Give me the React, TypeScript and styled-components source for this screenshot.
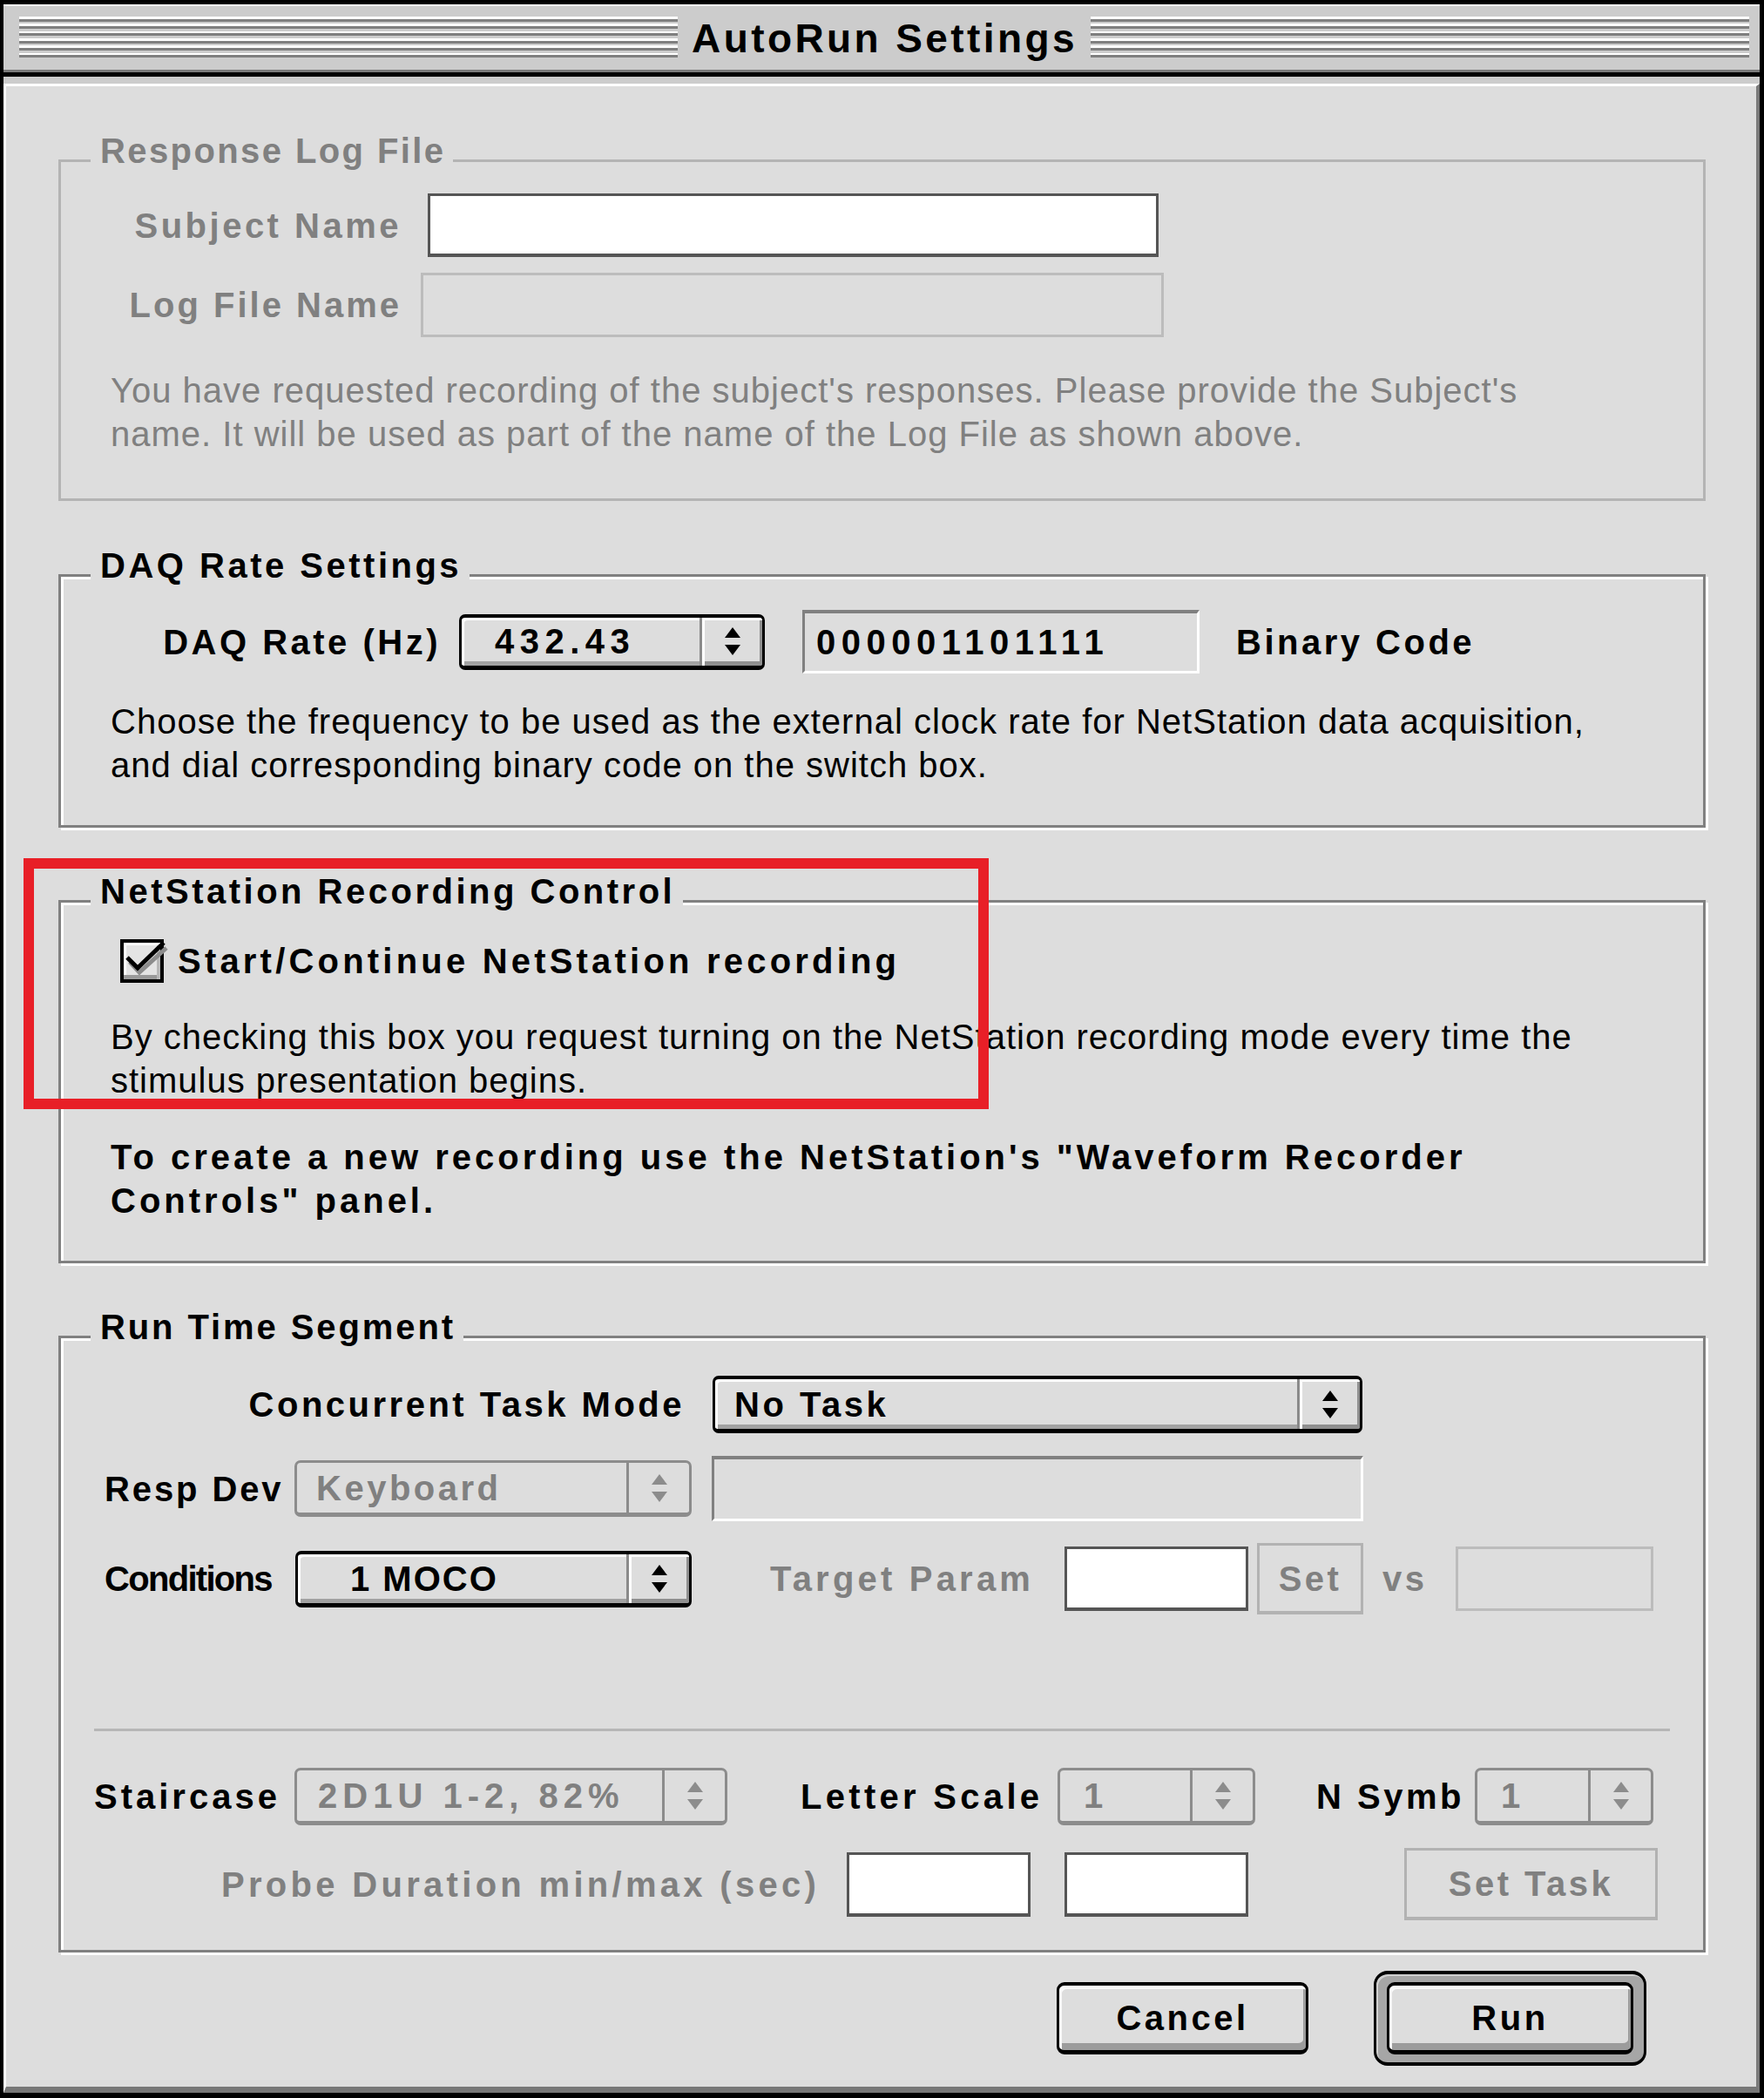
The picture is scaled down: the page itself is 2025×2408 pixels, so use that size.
import React from 'react';
import styled, { createGlobalStyle } from 'styled-components';

const FONT = `"Liberation Sans", Arial, Helvetica, sans-serif`;

const GlobalStyle = createGlobalStyle`
  html, body { margin: 0; padding: 0; background: #000; }
  body { font-family: ${FONT}; }
  #root { width: 2025px; height: 2408px; }
`;

const Window = styled.div`
  position: relative;
  width: 2025px;
  height: 2408px;
  box-sizing: border-box;
  border-style: solid;
  border-color: #000;
  border-width: 5px 5px 6px 4px;
  display: flex;
  flex-direction: column;
  background: #cccccc;
  font-family: ${FONT};
`;

const TitleBar = styled.div`
  flex: none;
  height: 83px;
  box-sizing: border-box;
  display: flex;
  align-items: center;
  padding: 2px 12px 3px 18px;
  background: #cccccc;
  border-bottom: 5px solid #000;
  box-shadow: inset 0 2px 0 #fff, inset 0 -3px 0 #7a7a7a;
`;

const Stripes = styled.div`
  flex: 1;
  height: 50px;
  background: repeating-linear-gradient(
    to bottom,
    #ffffff 0px,
    #ffffff 2.6px,
    #7f7f7f 2.6px,
    #7f7f7f 5.6px,
    transparent 5.6px,
    transparent 8.35px
  );
`;

const TitleText = styled.div`
  flex: none;
  margin: 0 15px 0 16px;
  font-weight: 700;
  font-size: 46px;
  line-height: 50px;
  letter-spacing: 3.4px;
  color: #000;
  white-space: nowrap;
`;

const Body = styled.div`
  flex: 1;
  display: flex;
  flex-direction: column;
  padding-top: 8px;
  background: #cccccc;
`;

const Panel = styled.div`
  flex: 1;
  display: flex;
  flex-direction: column;
  box-sizing: border-box;
  background: #dddddd;
  border-top: 3px solid #fff;
  border-left: 3px solid #fff;
  border-right: 4px solid #7a7a7a;
  border-bottom: 7px solid #777;
  padding: 84px 58px 0 60px;
`;

const Group = styled.section<{ $disabled?: boolean; $mt: number; $pb: number }>`
  margin-top: ${p => p.$mt}px;
  border: 3px solid ${p => (p.$disabled ? '#b4b4b4' : '#808080')};
  box-shadow: ${p => (p.$disabled ? 'none' : 'inset 3px 3px 0 #fff, 3px 3px 0 #fff')};
  padding-bottom: ${p => p.$pb}px;
  display: flex;
  flex-direction: column;
`;

const Legend = styled.div<{ $dim?: boolean; $ls?: number }>`
  align-self: flex-start;
  margin: -38px 0 0 34px;
  padding: 0 9px 0 11px;
  background: #dddddd;
  font-weight: 700;
  font-size: 40px;
  line-height: 50px;
  letter-spacing: ${p => p.$ls ?? 3.5}px;
  color: ${p => (p.$dim ? '#808080' : '#000')};
  white-space: nowrap;
`;

const Row = styled.div<{ $mt: number; $h: number }>`
  display: flex;
  align-items: center;
  margin-top: ${p => p.$mt}px;
  height: ${p => p.$h}px;
`;

const Label = styled.div<{ $w?: number; $ml?: number; $right?: boolean; $dim?: boolean; $ls?: number }>`
  flex: none;
  width: ${p => (p.$w ? `${p.$w}px` : 'auto')};
  margin-left: ${p => p.$ml ?? 0}px;
  text-align: ${p => (p.$right ? 'right' : 'left')};
  font-weight: 700;
  font-size: 40px;
  line-height: 50px;
  letter-spacing: ${p => p.$ls ?? 3.5}px;
  color: ${p => (p.$dim ? '#808080' : '#000')};
  white-space: nowrap;
`;

const Para = styled.p<{ $mt: number; $bold?: boolean; $dim?: boolean }>`
  margin: ${p => p.$mt}px 0 0 57px;
  font-size: 40px;
  line-height: 50px;
  font-weight: ${p => (p.$bold ? 700 : 400)};
  letter-spacing: ${p => (p.$bold ? 4 : 1)}px;
  color: ${p => (p.$dim ? '#808080' : '#000')};
  white-space: nowrap;
`;

const PopupFrame = styled.div<{ $w: number; $h: number; $ml?: number; $disabled?: boolean }>`
  flex: none;
  display: flex;
  width: ${p => p.$w}px;
  height: ${p => p.$h}px;
  margin-left: ${p => p.$ml ?? 0}px;
  box-sizing: border-box;
  border: 3px solid ${p => (p.$disabled ? '#8c8c8c' : '#000')};
  border-top-width: ${p => (p.$disabled ? 3 : 4)}px;
  border-bottom-width: 5px;
  border-radius: 7px;
  background: #dddddd;
  box-shadow: ${p => (p.$disabled ? 'none' : 'inset 3px 3px 0 #fff, inset 0 -5px 0 #a2a2a2')};
  overflow: hidden;
`;

const PopupValue = styled.div<{ $pad: number; $disabled?: boolean; $ls?: number }>`
  flex: 1;
  display: flex;
  align-items: center;
  padding-left: ${p => p.$pad}px;
  font-weight: 700;
  font-size: 40px;
  line-height: 50px;
  letter-spacing: ${p => p.$ls ?? 3.5}px;
  color: ${p => (p.$disabled ? '#808080' : '#000')};
  white-space: nowrap;
`;

const PopupArrows = styled.div<{ $disabled?: boolean }>`
  flex: none;
  width: 69px;
  display: flex;
  align-items: center;
  justify-content: center;
  border-left: 3px solid ${p => (p.$disabled ? '#8c8c8c' : '#8a8a8a')};
  box-shadow: ${p => (p.$disabled ? 'none' : 'inset 3px 3px 0 #fff, inset -3px -5px 0 #8f8f8f')};
`;

const TextBox = styled.div<{ $w: number; $h: number; $ml?: number }>`
  flex: none;
  width: ${p => p.$w}px;
  height: ${p => p.$h}px;
  margin-left: ${p => p.$ml ?? 0}px;
  box-sizing: border-box;
  background: #fff;
  border: 3px solid #555;
  border-bottom-width: 4px;
`;

const InsetField = styled.div<{ $w: number; $h: number; $ml?: number }>`
  flex: none;
  display: flex;
  align-items: center;
  width: ${p => p.$w}px;
  height: ${p => p.$h}px;
  margin-left: ${p => p.$ml ?? 0}px;
  box-sizing: border-box;
  background: #dddddd;
  border-style: solid;
  border-width: 4px 3px 3px 3px;
  border-color: #808080 #fff #fff #808080;
  padding-left: 13px;
`;

const FieldText = styled.span`
  font-weight: 700;
  font-size: 40px;
  line-height: 50px;
  letter-spacing: 6.5px;
  color: #000;
`;

const DimField = styled.div<{ $w: number; $h: number; $ml?: number }>`
  flex: none;
  width: ${p => p.$w}px;
  height: ${p => p.$h}px;
  margin-left: ${p => p.$ml ?? 0}px;
  box-sizing: border-box;
  background: #dddddd;
  border: 3px solid #bcbcbc;
`;

const DimButton = styled.div<{ $w: number; $h: number; $ml?: number }>`
  flex: none;
  display: flex;
  align-items: center;
  justify-content: center;
  width: ${p => p.$w}px;
  height: ${p => p.$h}px;
  margin-left: ${p => p.$ml ?? 0}px;
  box-sizing: border-box;
  background: #dddddd;
  border: 3px solid #b2b2b2;
  border-bottom-width: 4px;
  font-weight: 700;
  font-size: 40px;
  line-height: 50px;
  letter-spacing: 3.5px;
  color: #808080;
  white-space: nowrap;
`;

const Separator = styled.div`
  margin: 131px 0 0 38px;
  width: 1809px;
  height: 3px;
  background: #b6b6b6;
`;

const CheckWrap = styled.div`
  flex: none;
  width: 50px;
  height: 50px;
  margin-left: 68px;
  svg { display: block; overflow: visible; }
`;

const ButtonRow = styled.div`
  display: flex;
  justify-content: flex-end;
  align-items: center;
  margin-top: 21px;
  height: 109px;
  padding-right: 68px;
`;

const PushButton = styled.div<{ $w?: number }>`
  flex: none;
  display: flex;
  align-items: center;
  justify-content: center;
  width: ${p => (p.$w ? `${p.$w}px` : '100%')};
  height: 83px;
  box-sizing: border-box;
  background: #dddddd;
  border: 3px solid #000;
  border-top-width: 4px;
  border-bottom-width: 5px;
  border-radius: 9px;
  box-shadow: inset 3px 4px 0 #fafafa, inset -3px -8px 0 #9c9c9c;
  font-weight: 700;
  font-size: 40px;
  line-height: 50px;
  letter-spacing: 3.5px;
  color: #000;
  white-space: nowrap;
`;

const DefaultRing = styled.div`
  flex: none;
  display: flex;
  width: 313px;
  height: 109px;
  margin-left: 75px;
  box-sizing: border-box;
  border: 3px solid #000;
  border-top-width: 4px;
  border-bottom-width: 4px;
  border-radius: 16px;
  background: #a6a6a6;
  box-shadow: inset 2px 2px 0 #d0d0d0;
  padding: 9px 12px;
`;

const Highlight = styled.div`
  position: absolute;
  left: 23px;
  top: 980px;
  width: 1108px;
  height: 288px;
  box-sizing: border-box;
  border: 12px solid #e81f27;
  pointer-events: none;
`;

const Arrows: React.FC<{ color: string }> = ({ color }) => (
  <svg width="18" height="32" viewBox="0 0 18 32">
    <polygon points="9,0 18,12 0,12" fill={color} />
    <polygon points="0,20 18,20 9,32" fill={color} />
  </svg>
);

const Popup: React.FC<{
  w: number;
  h?: number;
  ml?: number;
  pad: number;
  value: string;
  disabled?: boolean;
  ls?: number;
}> = ({ w, h = 65, ml, pad, value, disabled, ls }) => (
  <PopupFrame $w={w} $h={h} $ml={ml} $disabled={disabled}>
    <PopupValue $pad={pad} $disabled={disabled} $ls={ls}>
      {value}
    </PopupValue>
    <PopupArrows $disabled={disabled}>
      <Arrows color={disabled ? '#8c8c8c' : '#000'} />
    </PopupArrows>
  </PopupFrame>
);

const CheckBox: React.FC = () => (
  <CheckWrap>
    <svg width="50" height="50" viewBox="0 0 50 50">
      <rect x="0" y="0" width="50" height="50" fill="#000" />
      <rect x="4" y="4" width="42" height="42" fill="#e4e4e4" />
      <rect x="4" y="4" width="42" height="3" fill="#fff" />
      <rect x="4" y="4" width="3" height="42" fill="#fff" />
      <rect x="4" y="41" width="42" height="5" fill="#9a9a9a" />
      <rect x="42" y="7" width="4" height="39" fill="#b8b8b8" />
      <polyline points="11,26 22,38 53,10" fill="none" stroke="#8c8c8c" strokeWidth="5" />
      <polyline points="8,21 20,33 50,4" fill="none" stroke="#000" strokeWidth="5" />
    </svg>
  </CheckWrap>
);

export default function App() {
  return (
    <>
      <GlobalStyle />
      <Window>
        <TitleBar>
          <Stripes />
          <TitleText>AutoRun Settings</TitleText>
          <Stripes />
        </TitleBar>
        <Body>
          <Panel>
            <Group $disabled $mt={0} $pb={49}>
              <Legend $dim $ls={2.4}>Response Log File</Legend>
              <Row $mt={24} $h={73}>
                <Label $w={391} $right $dim>Subject Name</Label>
                <TextBox $w={839} $h={73} $ml={30} />
              </Row>
              <Row $mt={18} $h={74}>
                <Label $w={391} $right $dim $ls={3}>Log File Name</Label>
                <DimField $w={853} $h={74} $ml={22} />
              </Row>
              <Para $mt={36} $dim>
                You have requested recording of the subject's responses. Please provide the Subject's
                <br />
                name. It will be used as part of the name of the Log File as shown above.
              </Para>
            </Group>

            <Group $mt={84} $pb={44}>
              <Legend>DAQ Rate Settings</Legend>
              <Row $mt={26} $h={73}>
                <Label $w={436} $right>DAQ Rate (Hz)</Label>
                <Popup w={351} h={64} ml={21} pad={38} value="432.43" ls={6.5} />
                <InsetField $w={456} $h={73} $ml={43}>
                  <FieldText>000001101111</FieldText>
                </InsetField>
                <Label $ml={42}>Binary Code</Label>
              </Row>
              <Para $mt={30}>
                Choose the frequency to be used as the external clock rate for NetStation data acquisition,
                <br />
                and dial corresponding binary code on the switch box.
              </Para>
            </Group>

            <Group $mt={83} $pb={44}>
              <Legend>NetStation Recording Control</Legend>
              <Row $mt={30} $h={50}>
                <CheckBox />
                <Label $ml={16} $ls={4.2}>Start/Continue NetStation recording</Label>
              </Row>
              <Para $mt={37}>
                By checking this box you request turning on the NetStation recording mode every time the
                <br />
                stimulus presentation begins.
              </Para>
              <Para $mt={38} $bold>
                To create a new recording use the NetStation's "Waveform Recorder
                <br />
                Controls" panel.
              </Para>
            </Group>

            <Group $mt={83} $pb={34}>
              <Legend $ls={2.9}>Run Time Segment</Legend>
              <Row $mt={31} $h={66}>
                <Label $w={716} $right>Concurrent Task Mode</Label>
                <Popup w={746} h={66} ml={32} pad={22} value="No Task" />
              </Row>
              <Row $mt={26} $h={75}>
                <Label $ml={50} $w={218} $ls={2.9}>Resp Dev</Label>
                <Popup w={456} pad={22} value="Keyboard" disabled />
                <InsetField $w={748} $h={75} $ml={23} />
              </Row>
              <Row $mt={25} $h={82}>
                <Label $ml={50} $w={219} $ls={-1.7}>Conditions</Label>
                <Popup w={455} pad={60} value="1 MOCO" ls={2} />
                <Label $ml={90} $w={338} $dim $ls={4.2}>Target Param</Label>
                <TextBox $w={211} $h={74} />
                <DimButton $w={122} $h={82} $ml={10}>Set</DimButton>
                <Label $ml={22} $w={84} $dim>vs</Label>
                <DimField $w={227} $h={74} />
              </Row>
              <Separator />
              <Row $mt={42} $h={66}>
                <Label $ml={38} $w={230} $ls={4}>Staircase</Label>
                <Popup w={497} h={66} pad={24} value="2D1U 1-2, 82%" ls={6} disabled />
                <Label $ml={84} $w={295} $ls={4.3}>Letter Scale</Label>
                <Popup w={227} h={66} pad={27} value="1" disabled />
                <Label $ml={70} $w={182}>N Symb</Label>
                <Popup w={205} h={66} pad={27} value="1" disabled />
              </Row>
              <Row $mt={26} $h={83}>
                <Label $ml={184} $w={718} $dim $ls={4.3}>Probe Duration min/max (sec)</Label>
                <TextBox $w={211} $h={74} />
                <TextBox $w={211} $h={74} $ml={39} />
                <DimButton $w={291} $h={83} $ml={179}>Set Task</DimButton>
              </Row>
            </Group>

            <ButtonRow>
              <PushButton $w={289}>Cancel</PushButton>
              <DefaultRing>
                <PushButton>Run</PushButton>
              </DefaultRing>
            </ButtonRow>
          </Panel>
        </Body>
        <Highlight />
      </Window>
    </>
  );
}
